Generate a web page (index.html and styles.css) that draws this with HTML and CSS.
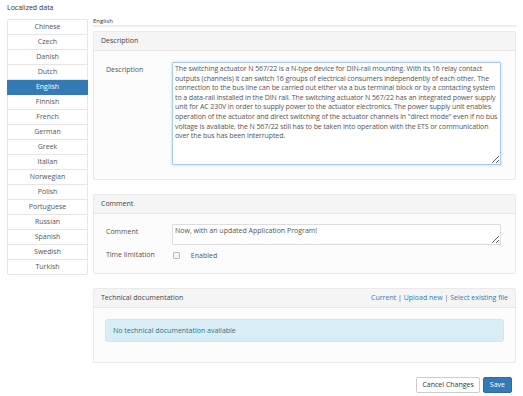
FILE: index.html
```html
<!DOCTYPE html>
<html lang="en">
<head>
    <meta charset="UTF-8">
    <title>Localized data</title>
    <link rel="stylesheet" href="styles.css">
</head>
<body>

<div class="page">
    <h4 class="page-title">Localized data</h4>

    <div class="layout">
        <ul class="lang-list">
            <li>Chinese</li>
            <li>Czech</li>
            <li>Danish</li>
            <li>Dutch</li>
            <li class="active">English</li>
            <li>Finnish</li>
            <li>French</li>
            <li>German</li>
            <li>Greek</li>
            <li>Italian</li>
            <li>Norwegian</li>
            <li>Polish</li>
            <li>Portuguese</li>
            <li>Russian</li>
            <li>Spanish</li>
            <li>Swedish</li>
            <li>Turkish</li>
        </ul>

        <div class="content">
            <div class="tab-title">English</div>

            <!-- Description -->
            <div class="panel">
                <div class="panel-heading">Description</div>
                <div class="panel-body">
                    <div class="form-row">
                        <label class="form-label">Description</label>
                        <div class="form-field">
                            <textarea class="form-control desc-text">The switching actuator N 567/22 is a N-type device for DIN-rail mounting. With its 16 relay contact outputs (channels) it can switch 16 groups of electrical consumers independently of each other. The connection to the bus line can be carried out either via a bus terminal block or by a contacting system to a data-rail installed in the DIN rail. The switching actuator N 567/22 has an integrated power supply unit for AC 230V in order to supply power to the actuator electronics. The power supply unit enables operation of the actuator and direct switching of the actuator channels in "direct mode" even if no bus voltage is available, the N 567/22 still has to be taken into operation with the ETS or communication over the bus has been interrupted.</textarea>
                        </div>
                    </div>
                </div>
            </div>

            <!-- Comment -->
            <div class="panel">
                <div class="panel-heading">Comment</div>
                <div class="panel-body comment-body">
                    <div class="form-row">
                        <label class="form-label">Comment</label>
                        <div class="form-field">
                            <textarea class="form-control comment-text">Now, with an updated Application Program!</textarea>
                        </div>
                    </div>
                    <div class="form-row check-row">
                        <label class="form-label">Time limitation</label>
                        <div class="form-field">
                            <span class="checkbox"></span>
                            <span class="check-label">Enabled</span>
                        </div>
                    </div>
                </div>
            </div>

            <!-- Technical documentation -->
            <div class="panel">
                <div class="panel-heading heading-links">
                    <span>Technical documentation</span>
                    <span class="links">
                        <a href="#">Current</a> | <a href="#">Upload new</a> | <a href="#">Select existing file</a>
                    </span>
                </div>
                <div class="panel-body doc-body">
                    <div class="alert-info">No technical documentation available</div>
                </div>
            </div>

            <div class="actions">
                <button class="btn">Cancel Changes</button>
                <button class="btn btn-primary">Save</button>
            </div>
        </div>
    </div>
</div>

</body>
</html>
```

FILE: styles.css
```css
/* Global */
body {
    margin: 0;
    font-family: 'Open Sans', sans-serif;
    font-size: 7px;
    color: #555;
    background: #fff;
}

.page {
    padding: 3px 7px 0 7px;
}

.page-title {
    margin: 0 0 5px 0;
    font-size: 7px;
    font-weight: normal;
    color: #333;
    line-height: 9px;
}

.layout {
    display: flex;
    gap: 5px;
}

/* Language list */
.lang-list {
    list-style: none;
    margin: 2px 0 0 0;
    padding: 0;
    width: 81px;
    flex: none;
}

.lang-list li {
    height: 15px;
    line-height: 14px;
    box-sizing: border-box;
    text-align: center;
    border: 1px solid #e6e6e6;
    border-top: none;
    background: #fff;
}

.lang-list li:first-child {
    height: 16px;
    border-top: 1px solid #e6e6e6;
    border-radius: 2px 2px 0 0;
}

.lang-list li:last-child {
    border-radius: 0 0 2px 2px;
}

.lang-list li.active {
    background: #337ab7;
    border-color: #337ab7;
    color: #fff;
}

/* Content */
.content {
    width: 423px;
}

.tab-title {
    font-size: 6px;
    color: #333;
    line-height: 8px;
    border-bottom: 2px solid #eee;
    margin-bottom: 4px;
}

.panel {
    border: 1px solid #eaeaea;
    border-radius: 2px;
    background: #fcfcfc;
    margin-bottom: 14px;
}

.panel-heading {
    height: 18px;
    line-height: 18px;
    padding: 0 7px;
    background: #f5f5f5;
    border-bottom: 1px solid #e6e6e6;
    color: #444;
}

.heading-links {
    display: flex;
    justify-content: space-between;
}

.links {
    color: #555;
}

.links a {
    color: #337ab7;
    text-decoration: none;
}

.panel-body {
    padding: 11px 14px 14px 12px;
}

.form-row {
    display: flex;
}

.form-label {
    width: 66px;
    flex: none;
    padding-top: 3px;
}

.form-field {
    flex: 1;
}

.form-control {
    display: block;
    box-sizing: border-box;
    width: 100%;
    font-family: 'Open Sans', sans-serif;
    font-size: 7px;
    color: #555;
    background: #fff;
    border: 1px solid #ddd;
    border-radius: 1px;
    padding: 1px 2px;
    margin: 0;
}

.desc-text {
    height: 103px;
    line-height: 9.6px;
    letter-spacing: -0.1px;
    padding-right: 0;
    border-color: #a9c9e8;
    box-shadow: 0 0 3px rgba(102, 175, 233, 0.4);
    resize: vertical;
    overflow: hidden;
}

.comment-text {
    height: 21px;
    line-height: 9.6px;
    resize: vertical;
}

.comment-body {
    padding-top: 10px;
    padding-bottom: 13px;
}

.check-row {
    margin-top: 5px;
    align-items: center;
}

.check-row .form-label {
    padding-top: 0;
}

.checkbox {
    display: inline-block;
    width: 5px;
    height: 5px;
    border: 1px solid #bbb;
    border-radius: 1px;
    background: #f4f4f4;
    vertical-align: middle;
    margin-left: 1px;
}

.check-label {
    margin-left: 9px;
    vertical-align: middle;
}

.doc-body {
    padding: 11px 11px 20px 11px;
}

.alert-info {
    background: #d9edf7;
    border: 1px solid #cfe6f2;
    border-radius: 3px;
    color: #31708f;
    height: 23px;
    line-height: 21px;
    box-sizing: border-box;
    padding: 0 7px;
}

.actions {
    display: flex;
    justify-content: flex-end;
    gap: 3px;
    padding-right: 4px;
    margin-top: 3px;
}

.btn {
    font-family: 'Open Sans', sans-serif;
    font-size: 7px;
    height: 16px;
    padding: 0 5px;
    border: 1px solid #ccc;
    border-radius: 2px;
    background: #fff;
    color: #333;
}

.btn-primary {
    background: #337ab7;
    border-color: #2e6da4;
    color: #fff;
    padding: 0 6px;
}
```
